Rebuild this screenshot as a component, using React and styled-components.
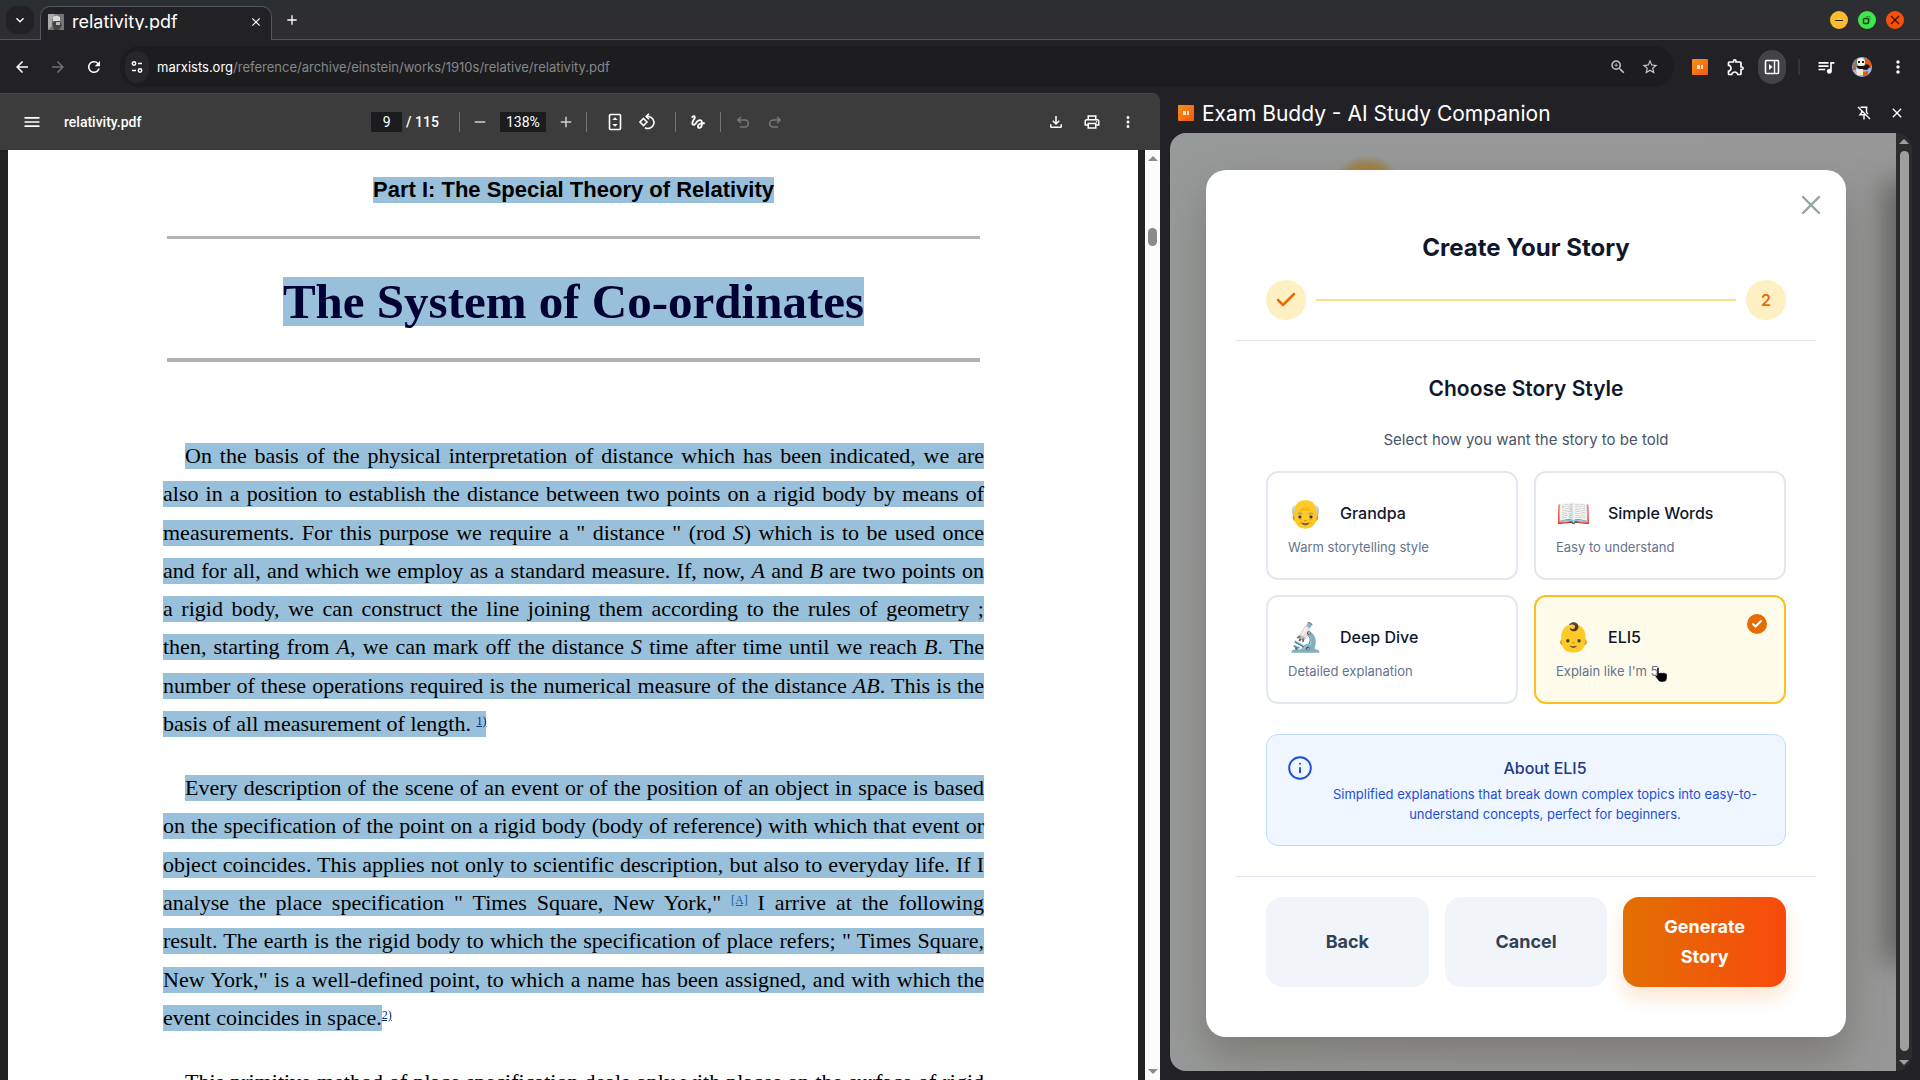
import React, { useState } from "react";
import styled, { createGlobalStyle, css } from "styled-components";
import {
  MdArrowBack,
  MdArrowForward,
  MdRefresh,
  MdClose,
  MdAdd,
  MdRemove,
  MdKeyboardArrowDown,
  MdMoreVert,
  MdOutlineZoomIn,
  MdStarOutline,
  MdOutlineExtension,
  MdQueueMusic,
  MdMenu,
  MdGesture,
  MdOutlineFileDownload,
  MdOutlinePrint,
} from "react-icons/md";
import { X, Check, Info } from "lucide-react";

const GlobalStyle = createGlobalStyle`
  * {
    box-sizing: border-box;
  }
  body {
    margin: 0;
    background: #222226;
    font-family: Inter, "Noto Sans", sans-serif;
    overflow: hidden;
  }
  button, input {
    font-family: inherit;
    border: none;
    padding: 0;
    margin: 0;
    background: none;
    color: inherit;
    cursor: pointer;
  }
  h1, h2, h3, p {
    margin: 0;
  }
`;

const Browser = styled.div`
  height: 100vh;
  display: flex;
  flex-direction: column;
  background: #222226;
  color: #fff;
`;

/* tab strip */

const TabStrip = styled.header`
  height: 40px;
  flex: none;
  display: flex;
  align-items: center;
  padding: 0 16px 0 6px;
  background: linear-gradient(#2b2e31, #2e2e32 50%);
  border-bottom: 1px solid #56565c;
`;

const TabSearch = styled.button`
  width: 28px;
  height: 28px;
  border-radius: 10px;
  background: #222226;
  display: grid;
  place-items: center;
  font-size: 16px;
`;

const Tab = styled.div`
  width: 232px;
  height: 34px;
  margin: 6px 0 -1px 6px;
  align-self: flex-end;
  padding: 0 7px 4px;
  display: flex;
  align-items: center;
  gap: 8px;
  background: #222226;
  border: 1px solid #56565c;
  border-bottom: none;
  border-radius: 10px 10px 0 0;
`;

const TabTitle = styled.span`
  flex: 1;
  height: 16px;
  line-height: 16px;
  font-size: 18px;
  overflow: hidden;
`;

const IconButton = styled.button`
  width: ${(p) => p.$w || 32}px;
  height: 32px;
  flex: none;
  display: grid;
  place-items: center;
  font-size: ${(p) => p.$size || 20}px;
  color: ${(p) => p.$color || "#fff"};
`;

const WindowButtons = styled.div`
  margin-left: auto;
  display: flex;
  gap: 10px;
`;

const Dot = styled.button`
  width: 18px;
  height: 18px;
  border-radius: 50%;
  background: ${(p) => p.$color};
  display: grid;
  place-items: center;
`;

/* address bar */

const NavBar = styled.nav`
  height: 53px;
  flex: none;
  display: flex;
  align-items: center;
  padding: 0 2px 0 6px;
`;

const NavButtons = styled.div`
  display: flex;
  gap: 4px;
  margin-right: 10px;
`;

const AddressBar = styled.div`
  flex: 1;
  height: 41px;
  display: flex;
  align-items: center;
  background: #1d1d1f;
  border-radius: 20px;
  padding: 0 8px 0 5px;
`;

const SiteInfo = styled.button`
  width: 24px;
  height: 32px;
  border-radius: 12px;
  background: #27272a;
  display: grid;
  place-items: center;
`;

const Url = styled.div`
  flex: 1;
  margin-left: 8px;
  font-size: 13px;
  color: #85878b;
  b {
    font-weight: 400;
    color: #fff;
  }
`;

const Actions = styled.div`
  display: flex;
  align-items: center;
  margin-left: 6px;
`;

const PanelToggle = styled.button`
  width: 28px;
  height: 34px;
  margin: 0 6px;
  border-radius: 14px;
  background: #434347;
  display: grid;
  place-items: center;
`;

const Separator = styled.i`
  width: 2px;
  height: 16px;
  margin: 0 6px;
  background: #333338;
`;

/* pdf viewer */

const Workspace = styled.div`
  flex: 1;
  min-height: 0;
  display: grid;
  grid-template-columns: 1160fr 760fr;
`;

const Viewer = styled.main`
  min-width: 0;
  min-height: 0;
  display: flex;
  flex-direction: column;
`;

const PdfBar = styled.div`
  height: 57px;
  flex: none;
  display: grid;
  grid-template-columns: 1fr auto 1fr;
  align-items: center;
  padding: 0 16px;
  background: #3c3c3c;
  border-top: 1px solid #48484a;
  border-radius: 0 8px 0 0;
  font-family: Roboto, sans-serif;
  font-size: 14px;
  font-weight: 500;
`;

const BarGroup = styled.div`
  display: flex;
  align-items: center;
  justify-content: ${(p) => p.$align || "flex-start"};
  gap: ${(p) => p.$gap || 0}px;
  margin: ${(p) => p.$m || 0};
`;

const BarInput = styled.input`
  width: ${(p) => p.$w}px;
  height: 20px;
  background: #1c1c1e;
  color: #fff;
  text-align: center;
  font-size: 14px;
  font-family: Roboto, sans-serif;
`;

const BarLine = styled.i`
  width: 1px;
  height: 20px;
  background: #757577;
`;

const PageArea = styled.div`
  flex: 1;
  min-height: 0;
  display: flex;
  background: #222;
  padding-left: 8px;
`;

const Page = styled.article`
  flex: 1;
  min-width: 0;
  overflow: hidden;
  margin-right: 7px;
  background: #fff;
  color: #000;
  display: flex;
  flex-direction: column;
  align-items: center;
  padding: 27px 154px 0 155px;
  font-family: "Liberation Serif", serif;
  > * {
    flex: none;
  }
`;

const selected = css`
  background: #99c0da;
`;

const PartTitle = styled.h2`
  ${selected}
  font-family: "Liberation Sans", sans-serif;
  font-size: 22px;
  line-height: 26px;
  font-weight: 700;
`;

const Rule = styled.hr`
  width: calc(100% - 8px);
  height: ${(p) => p.$h}px;
  border: none;
  margin: ${(p) => p.$m};
  background: #b3b3b3;
`;

const ChapterTitle = styled.h1`
  ${selected}
  font-size: 49px;
  line-height: 49px;
  font-weight: 700;
  color: #000033;
`;

const Paragraph = styled.div`
  width: 100%;
  min-height: ${(p) => p.$h}px;
  display: flex;
  flex-direction: column;
  justify-content: space-between;
  margin-bottom: 38px;
`;

const Line = styled.p`
  ${(p) => !p.$plain && selected}
  align-self: ${(p) => (p.$last ? "flex-start" : "stretch")};
  margin-left: ${(p) => (p.$indent ? 22 : 0)}px;
  height: 26px;
  font-size: 22px;
  line-height: 26px;
  white-space: nowrap;
  text-align: justify;
  text-align-last: ${(p) => (p.$last ? "left" : "justify")};
`;

const LastRow = styled.div`
  display: flex;
  align-items: flex-start;
`;

const Note = styled.a`
  font-size: 12px;
  line-height: 12px;
  vertical-align: 6px;
  color: ${(p) => p.$color || "#002a7a"};
  text-decoration: underline;
`;

const OuterNote = styled(Note)`
  line-height: 20px;
`;

const ScrollTrack = styled.div`
  width: ${(p) => p.$w}px;
  flex: none;
  display: flex;
  flex-direction: column;
  align-items: center;
  padding: 6px 0;
  background: ${(p) => p.$bg};
`;

const Thumb = styled.i`
  width: 9px;
  border-radius: 5px;
  background: ${(p) => p.$color};
  ${(p) => (p.$h ? `height: ${p.$h}px; margin: 67px 0 auto;` : "flex: 1; margin: 7px 0 9px;")}
`;

/* side panel */

const SidePanel = styled.aside`
  min-width: 0;
  min-height: 0;
  display: flex;
  flex-direction: column;
  padding: 0 8px 9px 10px;
`;

const PanelHeader = styled.div`
  height: 40px;
  flex: none;
  display: flex;
  align-items: center;
  padding-left: 8px;
  gap: 8px;
`;

const PanelTitle = styled.span`
  flex: 1;
  font-size: 21px;
  line-height: 28px;
  padding-top: 1px;
`;

const PanelBody = styled.div`
  flex: 1;
  min-height: 0;
  display: flex;
  border-radius: 16px;
  overflow: hidden;
`;

const Backdrop = styled.div`
  position: relative;
  flex: 1;
  min-width: 0;
  overflow: hidden;
  display: flex;
  flex-direction: column;
  padding: 37px 36px 34px;
  background:
    radial-gradient(circle 38px at 197px 60px, #b8790f 40%, #9c8450 75%, transparent),
    linear-gradient(100deg, #969a98, #999 40%, #979797);

  /* dimmed card of the page underneath */
  &::after {
    content: "";
    position: absolute;
    right: -20px;
    top: 60px;
    bottom: 120px;
    width: 20px;
    box-shadow: 0 0 28px 12px #62625f;
  }
`;

const Modal = styled.section`
  width: 100%;
  max-width: 640px;
  flex: 1;
  display: flex;
  flex-direction: column;
  padding: 24px 30px;
  background: #fff;
  border-radius: 20px;
  box-shadow: 0 20px 40px rgba(80, 78, 65, 0.4);
  color: #0f172a;
  text-align: center;
`;

const CloseModal = styled.button`
  align-self: flex-end;
  width: 32px;
  height: 32px;
  margin-right: -11px;
  margin-top: -5px;
  display: grid;
  place-items: center;
  color: #94a3a3;
`;

const ModalTitle = styled.h2`
  font-size: 24px;
  line-height: 32px;
  font-weight: 700;
  margin-top: 11px;
`;

const Steps = styled.div`
  display: flex;
  align-items: center;
  gap: 10px;
  padding: 16px 30px 20px;
  border-bottom: 1px solid #e2e8f0;
`;

const Step = styled.span`
  width: 40px;
  height: 40px;
  border-radius: 50%;
  display: grid;
  place-items: center;
  background: #fef0c3;
  color: #ea6a00;
  font-size: 16px;
  font-weight: 600;
`;

const StepLine = styled.i`
  flex: 1;
  height: 2px;
  background: #fde083;
`;

const ModalContent = styled.div`
  padding: 32px 30px 30px;
  border-bottom: 1px solid #e2e8f0;
`;

const SectionTitle = styled.h3`
  font-size: 21px;
  line-height: 32px;
  font-weight: 600;
`;

const Hint = styled.p`
  margin: 23px 0 19px;
  font-size: 15px;
  line-height: 24px;
  color: #475569;
`;

const StyleGrid = styled.div`
  display: grid;
  grid-template-columns: 1fr 1fr;
  gap: 15px 16px;
`;

const Card = styled.button`
  position: relative;
  height: 109px;
  padding: 0 20px;
  display: flex;
  flex-direction: column;
  justify-content: center;
  gap: 6px;
  text-align: left;
  border: 2px solid ${(p) => (p.$active ? "#fbbf24" : "#e2e8f0")};
  border-radius: 12px;
  background: ${(p) => (p.$active ? "#fffbeb" : "#fff")};
`;

const CardHead = styled.span`
  display: flex;
  align-items: center;
  gap: 16px;
  font-size: 16px;
  line-height: 36px;
  font-weight: 500;
  color: #0f172a;
`;

const Emoji = styled.span`
  width: 36px;
  font-size: 28px;
`;

const CardText = styled.span`
  font-size: 13px;
  line-height: 20px;
  color: #64748b;
`;

const Badge = styled.span`
  position: absolute;
  top: 17px;
  right: 17px;
  width: 20px;
  height: 20px;
  border-radius: 50%;
  background: #e66c02;
  color: #fff;
  display: grid;
  place-items: center;
`;

const Pointer = styled.svg`
  position: absolute;
  left: 118px;
  top: 70px;
`;

const InfoBox = styled.div`
  display: flex;
  gap: 12px;
  margin-top: 30px;
  padding: 20px;
  min-height: 112px;
  border: 1px solid #bfdbfe;
  border-radius: 12px;
  background: #eff6ff;
  color: #1d4ed8;
`;

const InfoText = styled.div`
  flex: 1;
  font-size: 13px;
  line-height: 20px;
`;

const InfoTitle = styled.h3`
  font-size: 16px;
  line-height: 26px;
  font-weight: 500;
  color: #1e3a8a;
  margin-bottom: 3px;
`;

const Footer = styled.div`
  display: grid;
  grid-template-columns: repeat(3, 1fr);
  gap: 16px;
  padding: 20px 30px;
`;

const Button = styled.button`
  height: 90px;
  padding: 0 30px;
  border-radius: 16px;
  font-size: 18px;
  line-height: 30px;
  font-weight: 700;
  background: #f1f5f9;
  color: #334155;
  ${(p) =>
    p.$primary &&
    css`
      background: linear-gradient(90deg, #e27002, #f94a0c);
      color: #fff;
      box-shadow: 0 10px 20px rgba(230, 120, 10, 0.2);
    `}
`;

const SiteIcon = () => (
  <svg width="16" height="16" viewBox="0 0 16 16" aria-hidden="true">
    <rect width="16" height="16" fill="#777" />
    <path d="M0 0h7L4 6v6l-4 4z" fill="#aaa" />
    <path d="M5 3q3-3 7 0v4H5z" fill="#d9d9d9" />
    <path d="M4 9l3-2h5l2 4-3 5H6z" fill="#444" />
    <path d="M8 8h4v3H8z" fill="#bbb" />
  </svg>
);

const BuddyIcon = () => (
  <svg width="16" height="16" viewBox="0 0 16 16" aria-hidden="true">
    <defs>
      <linearGradient id="buddy" x2="1" y2="1">
        <stop stopColor="#f69123" />
        <stop offset="1" stopColor="#f25a08" />
      </linearGradient>
    </defs>
    <rect width="16" height="16" rx="1" fill="url(#buddy)" />
    <path d="M5 6h3v4H5zM9 6h2v4H9z" fill="#ffe3c8" />
  </svg>
);

const Avatar = () => (
  <svg width="20" height="20" viewBox="0 0 20 20" aria-hidden="true">
    <clipPath id="face">
      <circle cx="10" cy="10" r="10" />
    </clipPath>
    <g clipPath="url(#face)">
      <rect width="20" height="20" fill="#9fb4e4" />
      <path d="M12 1l7 2v8l-6 1zM11 15l5-1v5h-5z" fill="#e2590f" />
      <path d="M0 3l5-3 1 8-5 3z" fill="#7d8468" />
      <path d="M1 9l3-1v5H1z" fill="#e2590f" />
      <circle cx="9" cy="5" r="4" fill="#f2f2f0" />
      <path d="M4 9h8l3-2 3 2-3 4-8-1z" fill="#16161a" />
      <path d="M4 12h7v6H5z" fill="#f8e6c8" />
      <path d="M6 4h2v2H6zM10 4h2v2h-2z" fill="#222" />
    </g>
  </svg>
);

const Arrow = ({ down, color }) => (
  <svg width="10" height="5" viewBox="0 0 10 5" aria-hidden="true">
    <path d={down ? "M0 0h10L5 5z" : "M0 5h10L5 0z"} fill={color} />
  </svg>
);

const stroke = { fill: "none", stroke: "currentColor" };

const TuneIcon = () => (
  <svg width="14" height="14" viewBox="0 0 14 14" {...stroke} strokeWidth="1.5">
    <circle cx="4" cy="3.5" r="1.7" />
    <path d="M8 3.5h4M2 10.5h4" />
    <circle cx="10" cy="10.5" r="1.7" />
  </svg>
);

const SidePanelIcon = () => (
  <svg width="16" height="16" viewBox="0 0 16 16" {...stroke} strokeWidth="1.6">
    <rect x="1.5" y="1.5" width="13" height="13" rx="1" />
    <path d="M10.5 2v12" strokeWidth="1.4" />
    <path d="M5 5l3.5 3L5 11z" fill="currentColor" stroke="none" />
  </svg>
);

const FitIcon = () => (
  <svg width="18" height="18" viewBox="0 0 18 18" {...stroke} strokeWidth="1.6">
    <rect x="3.5" y="1.5" width="11" height="15" rx="1" />
    <path d="M6.3 7L9 4.3 11.7 7zM6.3 11L9 13.7 11.7 11z" fill="currentColor" stroke="none" />
  </svg>
);

const RotateIcon = () => (
  <svg width="18" height="18" viewBox="0 0 18 18" {...stroke} strokeWidth="1.6">
    <path d="M5.5 5.5L9 9l-3.5 3.5L2 9z" />
    <path d="M8.5 3.5h2a6 6 0 1 1-3.5 11.2" />
    <path d="M11 .8L8.2 3.5 11 6.2" />
  </svg>
);

const UndoIcon = ({ flip }) => (
  <svg width="14" height="14" viewBox="0 0 14 14" {...stroke} strokeWidth="1.6">
    {flip ? (
      <path d="M9 2l3.2 3L9 8M12 5H5.2a3.4 3.4 0 0 0 0 7H10" />
    ) : (
      <path d="M5 2L1.8 5 5 8M2 5h6.800a3.4 3.4 0 0 1 0 7H4" />
    )}
  </svg>
);

const UnpinIcon = () => (
  <svg width="16" height="16" viewBox="0 0 16 16" {...stroke} strokeWidth="1.4">
    <path d="M4.5 2.2h7M10.5 2.2v5l1.5 2M5.7 5v2.5L4 9.8h6M8 10v4.5M2 2l12 12" />
  </svg>
);

const storyStyles = [
  { id: "grandpa", emoji: "👴", name: "Grandpa", text: "Warm storytelling style" },
  { id: "simple", emoji: "📖", name: "Simple Words", text: "Easy to understand" },
  { id: "deep", emoji: "🔬", name: "Deep Dive", text: "Detailed explanation" },
  { id: "eli5", emoji: "👶", name: "ELI5", text: "Explain like I'm 5" },
];

const Toolbar = () => (
  <PdfBar>
    <BarGroup $gap={16}>
      <IconButton aria-label="Menu"><MdMenu /></IconButton>
      <span>relativity.pdf</span>
    </BarGroup>
    <BarGroup $m="0 0 0 2px">
      <BarGroup $gap={4}>
        <BarInput $w={31} aria-label="Page" defaultValue="9" />
        <span>/ 115</span>
      </BarGroup>
      <BarGroup $m="0 0 0 20px">
        <BarLine />
        <IconButton $w={40} $size={18} $color="#d0d0d4" aria-label="Zoom out"><MdRemove /></IconButton>
        <BarInput $w={46} aria-label="Zoom" defaultValue="138%" />
        <IconButton $w={40} $size={18} $color="#d0d0d4" aria-label="Zoom in"><MdAdd /></IconButton>
        <BarLine />
      </BarGroup>
      <BarGroup $m="0 12px">
        <IconButton aria-label="Fit to page"><FitIcon /></IconButton>
        <IconButton aria-label="Rotate"><RotateIcon /></IconButton>
      </BarGroup>
      <BarLine />
      <IconButton $w={44} $size={18} aria-label="Draw"><MdGesture /></IconButton>
      <BarLine />
      <BarGroup $m="0 0 0 6px">
        <IconButton $color="#77777a" aria-label="Undo"><UndoIcon /></IconButton>
        <IconButton $color="#77777a" aria-label="Redo"><UndoIcon flip /></IconButton>
      </BarGroup>
    </BarGroup>
    <BarGroup $align="flex-end" $gap={4}>
      <IconButton $size={18} aria-label="Download"><MdOutlineFileDownload /></IconButton>
      <IconButton $size={18} aria-label="Print"><MdOutlinePrint /></IconButton>
      <IconButton $size={18} aria-label="More"><MdMoreVert /></IconButton>
    </BarGroup>
  </PdfBar>
);

const Document = () => (
  <Page>
    <PartTitle>Part I: The Special Theory of Relativity</PartTitle>
    <Rule $h={3} $m="33px 0 38px" />
    <ChapterTitle>The System of Co-ordinates</ChapterTitle>
    <Rule $h={4} $m="32px 0 81px" />
    <Paragraph $h={294}>
      <Line $indent>On the basis of the physical interpretation of distance which has been indicated, we are</Line>
      <Line>also in a position to establish the distance between two points on a rigid body by means of</Line>
      <Line>measurements. For this purpose we require a " distance " (rod <em>S</em>) which is to be used once</Line>
      <Line>and for all, and which we employ as a standard measure. If, now, <em>A</em> and <em>B</em> are two points on</Line>
      <Line>a rigid body, we can construct the line joining them according to the rules of geometry ;</Line>
      <Line>then, starting from <em>A</em>, we can mark off the distance <em>S</em> time after time until we reach <em>B</em>. The</Line>
      <Line>number of these operations required is the numerical measure of the distance <em>AB</em>. This is the</Line>
      <Line $last>basis of all measurement of length. <Note href="#1">1)</Note></Line>
    </Paragraph>
    <Paragraph $h={256}>
      <Line $indent>Every description of the scene of an event or of the position of an object in space is based</Line>
      <Line>on the specification of the point on a rigid body (body of reference) with which that event or</Line>
      <Line>object coincides. This applies not only to scientific description, but also to everyday life. If I</Line>
      <Line>analyse the place specification " Times Square, New York," <Note href="#a" $color="#0f5cb4">[A]</Note> I arrive at the following</Line>
      <Line>result. The earth is the rigid body to which the specification of place refers; " Times Square,</Line>
      <Line>New York," is a well-defined point, to which a name has been assigned, and with which the</Line>
      <LastRow>
        <Line $last>event coincides in space.</Line>
        <OuterNote href="#2">2)</OuterNote>
      </LastRow>
    </Paragraph>
    <Paragraph $h={26}>
      <Line $indent $plain>This primitive method of place specification deals only with places on the surface of rigid</Line>
    </Paragraph>
  </Page>
);

const StoryModal = () => {
  const [active, setActive] = useState("eli5");

  return (
    <Modal role="dialog" aria-label="Create Your Story">
      <CloseModal aria-label="Close"><X size={32} strokeWidth={1.8} /></CloseModal>
      <ModalTitle>Create Your Story</ModalTitle>
      <Steps>
        <Step><Check size={24} strokeWidth={2.5} /></Step>
        <StepLine />
        <Step>2</Step>
      </Steps>
      <ModalContent>
        <SectionTitle>Choose Story Style</SectionTitle>
        <Hint>Select how you want the story to be told</Hint>
        <StyleGrid>
          {storyStyles.map((s) => (
            <Card key={s.id} $active={s.id === active} onClick={() => setActive(s.id)}>
              <CardHead>
                <Emoji>{s.emoji}</Emoji>
                {s.name}
              </CardHead>
              <CardText>{s.text}</CardText>
              {s.id === active && (
                <>
                  <Badge><Check size={12} strokeWidth={4} /></Badge>
                  <Pointer width="14" height="16" viewBox="0 0 14 16">
                    <path d="M3 1q1-1.5 2 0v5h1q1-1 2 0h1q1-1 2 .3 2-.6 2 1.2V11q0 4-4 4H7Q5 15 3.5 12.5L1 9q0-1.5 2-.5z" fill="#000" stroke="#eee" strokeWidth=".5" />
                  </Pointer>
                </>
              )}
            </Card>
          ))}
        </StyleGrid>
        <InfoBox>
          <Info size={26} strokeWidth={1.8} />
          <InfoText>
            <InfoTitle>About ELI5</InfoTitle>
            <p>Simplified explanations that break down complex topics into easy-to-understand concepts, perfect for beginners.</p>
          </InfoText>
        </InfoBox>
      </ModalContent>
      <Footer>
        <Button>Back</Button>
        <Button>Cancel</Button>
        <Button $primary>Generate Story</Button>
      </Footer>
    </Modal>
  );
};

const App = () => {
  return (
    <Browser>
      <GlobalStyle />
      <TabStrip>
        <TabSearch aria-label="Search tabs"><MdKeyboardArrowDown /></TabSearch>
        <Tab>
          <SiteIcon />
          <TabTitle>relativity.pdf</TabTitle>
          <IconButton $w={16} $size={14} aria-label="Close tab"><MdClose /></IconButton>
        </Tab>
        <IconButton $w={40} $size={16} aria-label="New tab"><MdAdd /></IconButton>
        <WindowButtons>
          <Dot $color="#fdbc2c" aria-label="Minimize">
            <svg width="10" height="10" stroke="#222"><path d="M1 5.5h8" /></svg>
          </Dot>
          <Dot $color="#3ee84b" aria-label="Restore">
            <svg width="10" height="10" fill="none" stroke="#0a3a12"><rect x="1.5" y="3.5" width="5" height="5" rx="1" strokeWidth="1.5" /><path d="M4 1.5h4v4" opacity=".4" /></svg>
          </Dot>
          <Dot $color="#f8500c" aria-label="Close window">
            <svg width="10" height="10" stroke="#3a0e00"><path d="M1 1l8 8M9 1l-8 8" strokeWidth="1.3" /></svg>
          </Dot>
        </WindowButtons>
      </TabStrip>

      <NavBar>
        <NavButtons>
          <IconButton $size={18} aria-label="Back"><MdArrowBack /></IconButton>
          <IconButton $size={18} $color="#707074" aria-label="Forward"><MdArrowForward /></IconButton>
          <IconButton $size={18} aria-label="Reload"><MdRefresh /></IconButton>
        </NavButtons>
        <AddressBar>
          <SiteInfo aria-label="Site information"><TuneIcon /></SiteInfo>
          <Url><b>marxists.org</b>/reference/archive/einstein/works/1910s/relative/relativity.pdf</Url>
          <IconButton $size={18} $color="#c4c7c5" aria-label="Zoom"><MdOutlineZoomIn /></IconButton>
          <IconButton $size={18} $color="#c4c7c5" aria-label="Bookmark"><MdStarOutline /></IconButton>
        </AddressBar>
        <Actions>
          <IconButton $w={40} aria-label="Exam Buddy"><BuddyIcon /></IconButton>
          <IconButton aria-label="Extensions"><MdOutlineExtension /></IconButton>
          <PanelToggle aria-label="Side panel"><SidePanelIcon /></PanelToggle>
          <Separator />
          <IconButton $w={40} aria-label="Media"><MdQueueMusic /></IconButton>
          <IconButton aria-label="Profile"><Avatar /></IconButton>
          <IconButton $w={40} aria-label="Browser menu"><MdMoreVert /></IconButton>
        </Actions>
      </NavBar>

      <Workspace>
        <Viewer>
          <Toolbar />
          <PageArea>
            <Document />
            <ScrollTrack $w={15} $bg="#fcfcfc">
              <Arrow color="#8b8b8b" />
              <Thumb $h={18} $color="#8b8b8b" />
              <Arrow down color="#8b8b8b" />
            </ScrollTrack>
          </PageArea>
        </Viewer>
        <SidePanel>
          <PanelHeader>
            <BuddyIcon />
            <PanelTitle>Exam Buddy - AI Study Companion</PanelTitle>
            <IconButton $w={20} aria-label="Unpin"><UnpinIcon /></IconButton>
            <IconButton $w={30} $size={16} aria-label="Close side panel"><MdClose /></IconButton>
          </PanelHeader>
          <PanelBody>
            <Backdrop>
              <StoryModal />
            </Backdrop>
            <ScrollTrack $w={16} $bg="#2c2c2c">
              <Arrow color="#9f9f9f" />
              <Thumb $color="#9f9f9f" />
              <Arrow down color="#9f9f9f" />
            </ScrollTrack>
          </PanelBody>
        </SidePanel>
      </Workspace>
    </Browser>
  );
};

export default App;
